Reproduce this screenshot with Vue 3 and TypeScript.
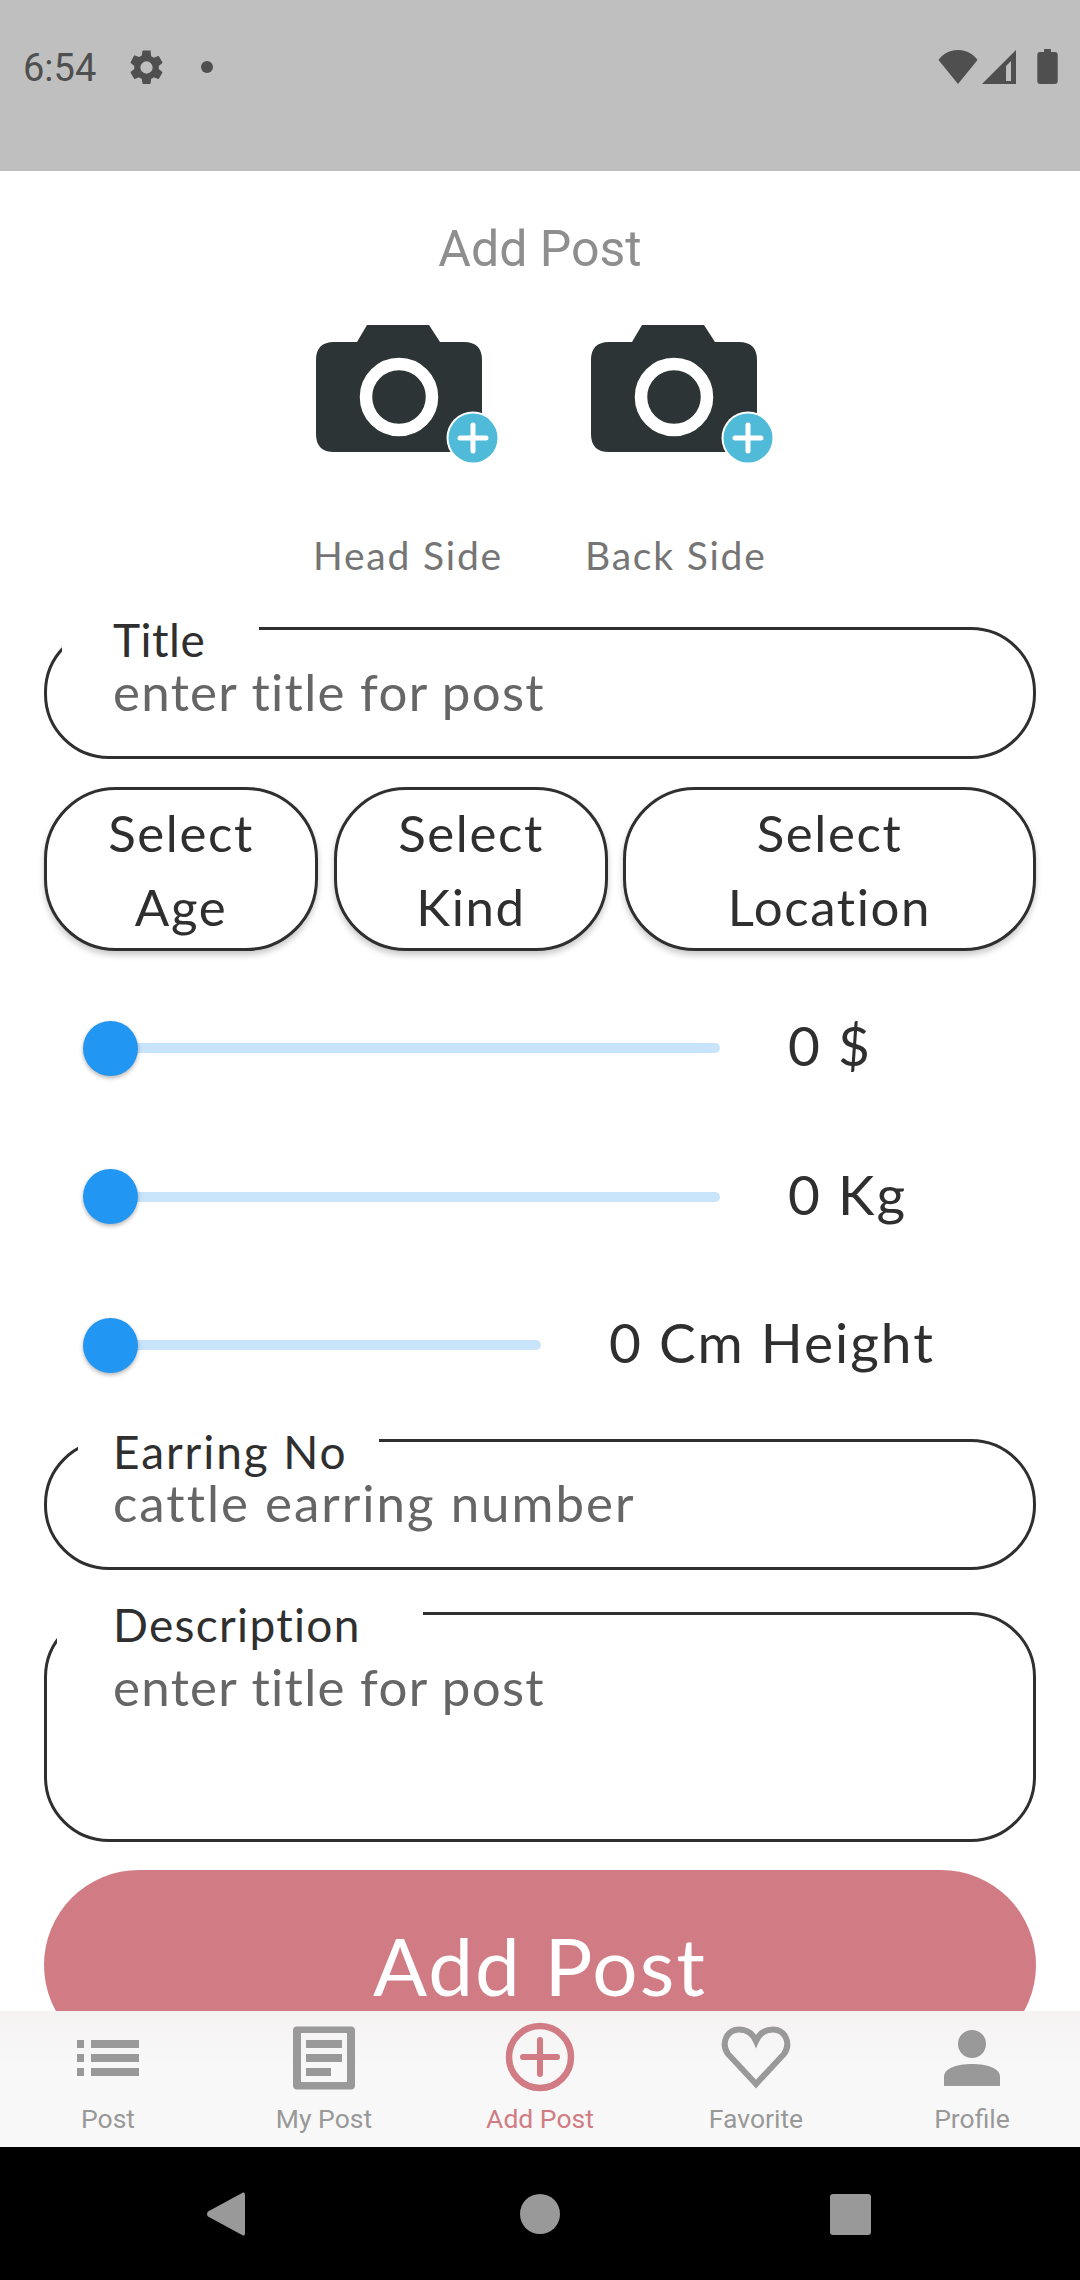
<script setup lang="ts">
const cameras = ['head', 'back']
const sliders = [
  { value: '0 $', width: 637 },
  { value: '0 Kg', width: 637 },
  { value: '0 Cm Height', width: 458 },
]
const selects = [
  { top: 'Select', bottom: 'Age', cls: 'sel-a' },
  { top: 'Select', bottom: 'Kind', cls: 'sel-b' },
  { top: 'Select', bottom: 'Location', cls: 'sel-c' },
]
</script>

<template>
  <div class="page">
    <header class="status">
      <span class="time">6:54</span>
      <svg class="gear" viewBox="0 0 24 24"><path d="M19.14 12.94c.04-.3.06-.61.06-.94s-.02-.64-.07-.94l2.03-1.58a.49.49 0 0 0 .12-.61l-1.92-3.32a.49.49 0 0 0-.59-.22l-2.39.96c-.5-.38-1.03-.7-1.62-.94l-.36-2.54A.48.48 0 0 0 13.92 2h-3.84a.47.47 0 0 0-.47.41l-.36 2.54c-.59.24-1.13.57-1.62.94l-2.39-.96a.48.48 0 0 0-.59.22L2.74 8.87a.47.47 0 0 0 .12.61l2.03 1.58c-.05.3-.09.63-.09.94s.02.64.07.94l-2.03 1.58a.49.49 0 0 0-.12.61l1.92 3.32c.12.22.37.29.59.22l2.39-.96c.5.38 1.03.7 1.62.94l.36 2.54c.05.24.24.41.48.41h3.84c.24 0 .44-.17.47-.41l.36-2.54c.59-.24 1.13-.56 1.62-.94l2.39.96c.22.08.47 0 .59-.22l1.92-3.32a.47.47 0 0 0-.12-.61l-2.01-1.58zM12 15.6A3.6 3.6 0 1 1 12 8.4a3.6 3.6 0 0 1 0 7.2z"/></svg>
      <span class="dot"></span>
      <span class="spacer"></span>
      <svg class="wifi" viewBox="0 0 40 34"><path d="M20 34 L0.500 10 C3 6 10 0 20 0 C30 0 37 6 39.500 10 Z"/></svg>
      <svg class="signal" viewBox="0 0 34 34"><path fill-rule="evenodd" d="M0 34 L34 0 V34 Z M24 31 H29 V11 L24 16 Z"/></svg>
      <svg class="battery" viewBox="0 0 21 36"><path d="M7 0 H14 V3 H18 Q21 3 21 6 V33 Q21 36 18 36 H3 Q0 36 0 33 V6 Q0 3 3 3 H7 Z"/></svg>
    </header>

    <main class="main">
      <h1 class="heading">Add Post</h1>

      <div class="cameras">
        <svg v-for="c in cameras" :key="c" class="camera" viewBox="0 0 182 138">
          <path class="cam-body" d="M0 35 Q0 17 18 17 H41 L51 0 H113 L124 17 H148 Q166 17 166 35 V109 Q166 127 148 127 H18 Q0 127 0 109 Z"/>
          <circle cx="83" cy="72" r="33" fill="none" stroke="#fff" stroke-width="12.5"/>
          <circle cx="157" cy="113" r="26.500" fill="#fff"/>
          <circle cx="157" cy="113" r="24.500" fill="#4fbbd9"/>
          <path d="M157 100 V126 M144 113 H170" stroke="#fff" stroke-width="5" stroke-linecap="round"/>
        </svg>
      </div>

      <div class="cam-labels">
        <span class="cam-label head">Head Side</span>
        <span class="cam-label back">Back Side</span>
      </div>

      <div class="field title-field">
        <span class="field-label">Title</span>
        <div class="placeholder">enter title for post</div>
      </div>

      <div class="selects">
        <div v-for="s in selects" :key="s.bottom" class="select" :class="s.cls">
          <span>{{ s.top }}</span>
          <span>{{ s.bottom }}</span>
        </div>
      </div>

      <div class="sliders">
        <div v-for="s in sliders" :key="s.value" class="slider-row">
          <div class="slider" :style="{ width: s.width + 'px' }">
            <div class="track"></div>
            <div class="thumb"></div>
          </div>
          <span class="slider-value">{{ s.value }}</span>
        </div>
      </div>

      <div class="field earring-field">
        <span class="field-label">Earring No</span>
        <div class="placeholder">cattle earring number</div>
      </div>

      <div class="field desc-field">
        <span class="field-label">Description</span>
        <div class="placeholder">enter title for post</div>
      </div>

      <div class="submit">Add Post</div>
    </main>

    <nav class="tabs">
      <div class="tab">
        <svg class="tab-icon" viewBox="0 0 64 64"><path d="M1 14h7v8H1z M15 14h48v8H15z M1 28h7v8H1z M15 28h48v8H15z M1 42h7v8H1z M15 42h48v8H15z"/></svg>
        <span>Post</span>
      </div>
      <div class="tab">
        <svg class="tab-icon" viewBox="0 0 64 64"><path fill-rule="evenodd" d="M5 0.500H59Q63 0.500 63 4.500V59.500Q63 63.500 59 63.500H5Q1 63.500 1 59.500V4.500Q1 0.500 5 0.500Z M9 7V56H55V7Z"/><path d="M14 14H50V22H14z M14 28H50V36H14z M14 42H39V50H14z"/></svg>
        <span>My Post</span>
      </div>
      <div class="tab active">
        <svg class="tab-icon icon-add" viewBox="0 0 70 70"><circle cx="35" cy="35" r="31" fill="none" stroke="#d17c84" stroke-width="6.500"/><path d="M35 18V52M18 35H52" stroke="#d17c84" stroke-width="6" stroke-linecap="round"/></svg>
        <span>Add Post</span>
      </div>
      <div class="tab">
        <svg class="tab-icon icon-heart" viewBox="0 0 70 64"><path d="M35 58 L7 28 C-1 16 7 3.500 18 3.500 C26 3.500 32 8 35 15 C38 8 44 3.500 52 3.500 C63 3.500 71 16 63 28 Z" fill="none" stroke="#999" stroke-width="6"/></svg>
        <span>Favorite</span>
      </div>
      <div class="tab">
        <svg class="tab-icon icon-person" viewBox="0 0 56 56"><circle cx="28" cy="14" r="14"/><path d="M0 56 V47 C0 38 13 34 28 34 C43 34 56 38 56 47 V56 Z"/></svg>
        <span>Profile</span>
      </div>
    </nav>

    <footer class="sysnav">
      <svg class="nav-back" viewBox="0 0 38 44"><path d="M36 0.500 Q38 0 38 2.500 V41.500 Q38 44 36 43.500 L1 24.500 Q-1 22 1 19.500 Z"/></svg>
      <span class="nav-home"></span>
      <span class="nav-recent"></span>
    </footer>
  </div>
</template>

<style>
html, body { margin: 0; padding: 0; background: #fff; }
</style>

<style scoped>
.page {
  width: 1080px;
  height: 2280px;
  display: flex;
  flex-direction: column;
  overflow: hidden;
  background: #fff;
  font-family: Lato, "Noto Sans", sans-serif;
  color: #2f2f2f;
}
.status {
  height: 171px;
  flex: none;
  box-sizing: border-box;
  background: #bfbfbf;
  display: flex;
  align-items: flex-start;
  padding: 50px 22px 0 23px;
  color: #4f4f4f;
}
.time {
  font: 38px/36px Roboto, sans-serif;
  width: 73px;
}
.status svg { fill: #4f4f4f; flex: none; }
.gear { width: 41px; height: 41px; margin: -3px 0 0 30px; }
.dot { width: 12px; height: 12px; border-radius: 50%; background: #4f4f4f; margin: 11px 0 0 34px; }
.spacer { flex: 1; }
.wifi { width: 40px; height: 34px; }
.signal { width: 34px; height: 34px; margin-left: 4px; }
.battery { width: 21px; height: 35px; margin-left: 21px; margin-top: -1px; }

.main {
  flex: 1;
  min-height: 0;
  overflow: hidden;
  padding: 0 44px;
}
.heading {
  margin: 50px 0 0;
  font: 400 50px/56px Roboto, sans-serif;
  color: #8e8e8e;
  text-align: center;
}
.cameras {
  display: flex;
  gap: 93px;
  margin: 48px 0 0 272px;
  height: 138px;
}
.camera { width: 182px; height: 138px; flex: none; }
.cam-body { fill: #2d3436; }
.cam-labels {
  display: flex;
  margin: 67px 0 0 269px;
  height: 50px;
  align-items: center;
}
.cam-label {
  font-size: 39px;
  line-height: 50px;
  color: #757575;
  letter-spacing: 1.8px;
}
.cam-label.back { margin-left: 82px; }

.field {
  position: relative;
  box-sizing: border-box;
  border: 3px solid #2f2f2f;
  border-radius: 65px;
  background: #fff;
}
.field-label {
  position: absolute;
  top: -14px;
  left: 15px;
  height: 38px;
  padding: 0 0 0 51px;
  background: #fff;
  font-size: 46px;
  line-height: 48px;
  color: #2f2f2f;
  letter-spacing: 0.500px;
}
.placeholder {
  position: absolute;
  left: 66px;
  font-size: 51px;
  line-height: 60px;
  color: #666;
  letter-spacing: 1.3px;
}
.title-field { height: 132px; margin-top: 47px; }
.title-field .field-label { width: 146px; }
.title-field .placeholder { top: 32px; }

.selects {
  display: flex;
  gap: 16px;
  margin-top: 28px;
}
.select {
  box-sizing: border-box;
  height: 164px;
  padding-top: 2px;
  border: 3px solid #2f2f2f;
  border-radius: 72px;
  background: #fff;
  box-shadow: 0 4px 6px rgba(0, 0, 0, 0.22);
  display: flex;
  flex-direction: column;
  align-items: center;
  justify-content: center;
  font-size: 51px;
  line-height: 74px;
  letter-spacing: 1.6px;
}
.sel-a, .sel-b { width: 274px; flex: none; }
.sel-b { margin-right: -1px; }
.sel-c { flex: 1; }

.sliders { margin-top: 23px; }
.slider-row {
  height: 148.5px;
  display: flex;
  align-items: center;
  padding-left: 39px;
  gap: 68px;
}
.slider { position: relative; height: 55px; flex: none; }
.track {
  position: absolute;
  left: 27px;
  right: 0;
  top: 22.500px;
  height: 10px;
  border-radius: 5px;
  background: #c8e4fb;
}
.thumb {
  position: absolute;
  left: 0;
  top: 0;
  width: 55px;
  height: 55px;
  border-radius: 50%;
  background: #2196f3;
  box-shadow: 0 2px 4px rgba(0, 0, 0, 0.3);
}
.slider-value {
  font-size: 55px;
  line-height: 60px;
  letter-spacing: 2px;
  margin-top: -6px;
}

.earring-field { height: 131px; margin-top: 19px; }
.earring-field .field-label { left: 31px; padding-left: 35px; width: 266px; letter-spacing: 1.9px; }
.earring-field .placeholder { top: 31px; letter-spacing: 2px; }
.desc-field { height: 230px; margin-top: 42px; }
.desc-field .field-label { left: 10px; padding-left: 56px; width: 310px; height: 48px; line-height: 48px; letter-spacing: 1.3px; }
.desc-field .placeholder { top: 42px; }

.submit {
  margin-top: 28px;
  height: 190px;
  border-radius: 95px;
  background: #d17c84;
  color: #fff;
  font-size: 80px;
  line-height: 190px;
  text-align: center;
  letter-spacing: 2px;
}

.tabs {
  height: 136px;
  flex: none;
  display: flex;
  background: linear-gradient(#f5f2f2, #f8f8f8 40%);
}
.tab {
  flex: 1;
  display: flex;
  flex-direction: column;
  align-items: center;
  font: 26.5px/30px Roboto, sans-serif;
  color: #999;
  position: relative;
  padding-top: 93px;
  box-sizing: border-box;
}
.tab.active { color: #d17c84; }
.tab-icon {
  position: absolute;
  top: 15px;
  left: 50%;
  width: 64px;
  height: 64px;
  transform: translateX(-50%);
  fill: #999;
}
.icon-add { width: 70px; height: 70px; top: 11px; }
.icon-heart { width: 70px; height: 64px; }
.icon-person { width: 56px; height: 56px; top: 19px; }
.sysnav {
  height: 133px;
  flex: none;
  background: #000;
  position: relative;
}
.nav-back {
  position: absolute;
  left: 207px;
  top: 45px;
  width: 38px;
  height: 44px;
  fill: #999;
}
.nav-home {
  position: absolute;
  left: 520px;
  top: 47px;
  width: 40px;
  height: 40px;
  border-radius: 50%;
  background: #999;
}
.nav-recent {
  position: absolute;
  left: 830px;
  top: 47px;
  width: 41px;
  height: 41px;
  border-radius: 3px;
  background: #999;
}
</style>
